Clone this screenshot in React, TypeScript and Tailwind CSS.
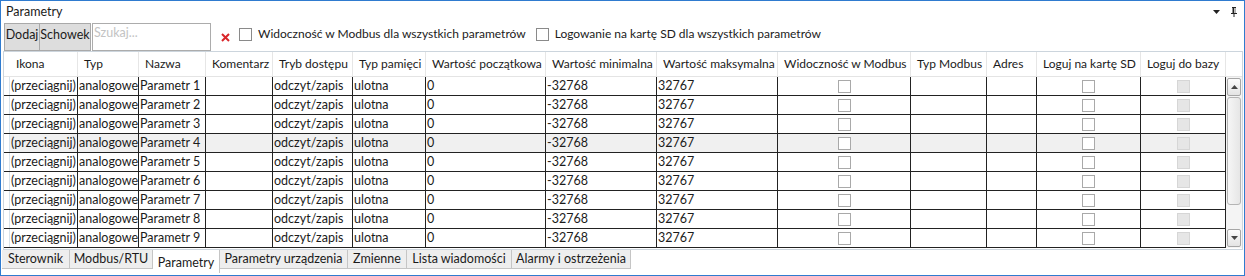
const columns = [
  { title: "Ikona", w: "w-[68px]" },
  { title: "Typ", w: "w-[61px]" },
  { title: "Nazwa", w: "w-[67px]" },
  { title: "Komentarz", w: "w-[67px]" },
  { title: "Tryb dostępu", w: "w-[80px]" },
  { title: "Typ pamięci", w: "w-[73px]" },
  { title: "Wartość początkowa", w: "w-[120px]" },
  { title: "Wartość minimalna", w: "w-[111px]" },
  { title: "Wartość maksymalna", w: "w-[121px]" },
  { title: "Widoczność w Modbus", w: "w-[133px]" },
  { title: "Typ Modbus", w: "w-[76px]" },
  { title: "Adres", w: "w-[50px]" },
  { title: "Loguj na kartę SD", w: "w-[104px]" },
  { title: "Loguj do bazy", w: "w-[85px]" },
]

const tabs = [
  { label: "Sterownik", w: "w-[68px]" },
  { label: "Modbus/RTU", w: "w-[83px]" },
  { label: "Parametry", w: "w-[67px]", active: true },
  { label: "Parametry urządzenia", w: "w-[128px]" },
  { label: "Zmienne", w: "w-[59px]" },
  { label: "Lista wiadomości", w: "w-[105px]" },
  { label: "Alarmy i ostrzeżenia", w: "w-[119px]" },
]

const rows = [1, 2, 3, 4, 5, 6, 7, 8, 9]

function Box({ disabled }: { disabled?: boolean }) {
  return (
    <span
      className={
        disabled
          ? "block w-[13px] h-[13px] border border-[#d6d6d6] bg-[#e6e6e6]"
          : "block w-[13px] h-[13px] border border-[#a9a9a9] bg-white"
      }
    />
  )
}

function Cell({ w, children, center }: { w: string; children?: React.ReactNode; center?: boolean }) {
  return (
    <div
      className={`${w} shrink-0 h-full border-r border-[#222] flex items-center overflow-hidden whitespace-nowrap ${
        center ? "justify-center" : "pl-[1px]"
      }`}
    >
      {children}
    </div>
  )
}

function ScrollArrow({ down }: { down?: boolean }) {
  return (
    <div className="h-[18px] mx-[1px] rounded-[2px] border border-[#a6a6a6] bg-gradient-to-b from-[#fbfbfb] to-[#e4e4e4] flex items-center justify-center">
      <svg width="7" height="4" viewBox="0 0 7 4">
        {down ? <path d="M0 0h7L3.5 4z" fill="#444" /> : <path d="M0 4h7L3.5 0z" fill="#444" />}
      </svg>
    </div>
  )
}

export default function App() {
  return (
    <div
      className="w-[1245px] h-[276px] border border-[#2f7bcf] bg-white text-[12px] text-[#1b1b1b] flex flex-col overflow-hidden"
      style={{ fontFamily: 'Lato, "Noto Sans", sans-serif' }}
    >
      {/* title bar */}
      <div className="h-[22px] shrink-0 flex items-center justify-between pl-[5px] pr-[7px]">
        <span className="text-[12.5px]">Parametry</span>
        <div className="flex items-center gap-[11px]">
          <svg width="7" height="4" viewBox="0 0 7 4">
            <path d="M0 0h7L3.5 4z" fill="#222" />
          </svg>
          <svg width="6" height="10" viewBox="0 0 6 10">
            <path d="M1 0h4v1H4.5v5H6v1H3.5v3h-1V7H0V6h1.5V1H1z" fill="#222" />
            <rect x="3.3" y="1" width="1" height="5" fill="#fff" />
          </svg>
        </div>
      </div>

      {/* toolbar */}
      <div className="h-[28px] shrink-0 flex items-start pl-[3px] text-[12.5px]">
        <button className="h-[28px] w-[36px] bg-[#dddddd] border border-[#a9a9a9] flex items-end justify-center pb-[5px]">
          Dodaj
        </button>
        <button className="h-[28px] w-[51px] bg-[#dddddd] border border-[#a9a9a9] border-l-0 flex items-end justify-center pb-[5px]">
          Schowek
        </button>
        <div className="h-[28px] w-[119px] ml-[1px] border border-[#acacac] bg-white pl-[1px] pt-[1px] text-[#c3c3c3] leading-[16px]">
          Szukaj...
        </div>
        <div className="ml-[10px] mt-[10px]">
          <svg width="9" height="9" viewBox="0 0 9 9">
            <path d="M1 1l7 7M8 1L1 8" stroke="#d9262a" strokeWidth="2" />
          </svg>
        </div>
        <div className="ml-[9px] mt-[2px] flex items-center gap-[6px] text-[12px]">
          <span className="block w-[13px] h-[13px] border border-[#8a8a8a] bg-white" />
          <span>Widoczność w Modbus dla wszystkich parametrów</span>
        </div>
        <div className="ml-[10px] mt-[2px] flex items-center gap-[6px] text-[12px]">
          <span className="block w-[13px] h-[13px] border border-[#8a8a8a] bg-white" />
          <span>Logowanie na kartę SD dla wszystkich parametrów</span>
        </div>
      </div>

      {/* grid */}
      <div className="ml-[2px] w-[1240px] shrink-0 border border-[#ccd5dd] pb-[1px]">
        <div className="h-[25px] flex border-b border-[#e4e4e4]">
          <div className="w-[6px] shrink-0" />
          {columns.map((c) => (
            <div
              key={c.title}
              className={`${c.w} shrink-0 border-r border-[#e6e6e6] pl-[6px] flex items-center whitespace-nowrap overflow-hidden`}
            >
              {c.title}
            </div>
          ))}
        </div>
        <div className="flex text-[12.5px]">
          <div className="flex flex-col">
            {rows.map((n) => (
              <div
                key={n}
                className={`h-[19px] flex border-b border-[#222] ${n === 4 ? "bg-[#f0f0f0]" : ""}`}
              >
                <div className="w-[6px] shrink-0 h-full border-r border-[#d8e2ea] bg-white" />
                <Cell w="w-[68px]">(przeciągnij)</Cell>
                <Cell w="w-[61px]">analogowe</Cell>
                <Cell w="w-[67px]">Parametr {n}</Cell>
                <Cell w="w-[67px]" />
                <Cell w="w-[80px]">odczyt/zapis</Cell>
                <Cell w="w-[73px]">ulotna</Cell>
                <Cell w="w-[120px]">0</Cell>
                <Cell w="w-[111px]">-32768</Cell>
                <Cell w="w-[121px]">32767</Cell>
                <Cell w="w-[133px]" center>
                  <Box />
                </Cell>
                <Cell w="w-[76px]" />
                <Cell w="w-[50px]" />
                <Cell w="w-[104px]" center>
                  <Box />
                </Cell>
                <Cell w="w-[85px]" center>
                  <Box disabled />
                </Cell>
              </div>
            ))}
          </div>
          <div className="w-[16px] h-[171px] bg-[#f4f4f4] flex flex-col pt-[1px]">
            <ScrollArrow />
            <div className="h-[108px] mx-[1px] mt-[1px] rounded-[3px] border border-[#b4b4b4] bg-gradient-to-r from-[#f6f6f6] to-[#e6e6e6]" />
            <div className="flex-1" />
            <div className="mb-[1px]">
              <ScrollArrow down />
            </div>
          </div>
        </div>
      </div>

      {/* tabs */}
      <div className="flex items-start pl-[1px] text-[12.5px]">
        {tabs.map((t) => (
          <div
            key={t.label}
            className={
              t.active
                ? `${t.w} h-[23px] shrink-0 bg-white border-r border-[#c5c5c5] flex items-center justify-center pt-[3px] whitespace-nowrap`
                : `${t.w} h-[19px] shrink-0 bg-[#eeeeee] border-r border-b border-[#c5c5c5] flex items-center justify-center whitespace-nowrap`
            }
          >
            {t.label}
          </div>
        ))}
      </div>
    </div>
  )
}
